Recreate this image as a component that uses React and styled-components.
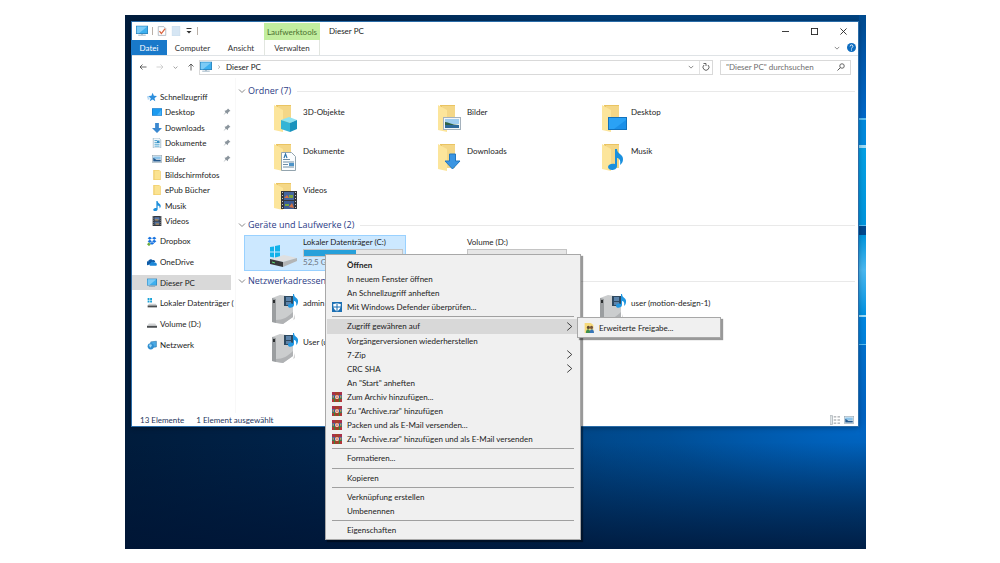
import React from "react";
import styled, { createGlobalStyle } from "styled-components";

const GlobalStyle = createGlobalStyle`
  * {
    box-sizing: border-box;
  }

  body {
    margin: 0;
    background: #fff;
    font-family: Lato, "Open Sans", sans-serif;
    font-size: 8px;
    line-height: 10px;
    color: #1c1c1c;
  }

  button,
  input {
    font: inherit;
    color: inherit;
    margin: 0;
    padding: 0;
    border: 0;
    background: none;
  }

  ul {
    margin: 0;
    padding: 0;
    list-style: none;
  }

  svg {
    display: block;
    flex: none;
  }
`;

const quickAccess = [
  { label: "Schnellzugriff", icon: "star", root: true },
  { label: "Desktop", icon: "desktop", pinned: true },
  { label: "Downloads", icon: "download", pinned: true },
  { label: "Dokumente", icon: "document", pinned: true },
  { label: "Bilder", icon: "picture", pinned: true },
  { label: "Bildschirmfotos", icon: "folder" },
  { label: "ePub Bücher", icon: "folder" },
  { label: "Musik", icon: "music" },
  { label: "Videos", icon: "video" },
];

const places = [
  { label: "Dropbox", icon: "dropbox", root: true },
  { label: "OneDrive", icon: "cloud", root: true },
  { label: "Dieser PC", icon: "pc", root: true, active: true },
  { label: "Lokaler Datenträger (", icon: "systemDrive", root: true },
  { label: "Volume (D:)", icon: "drive", root: true },
  { label: "Netzwerk", icon: "network", root: true },
];

const folders = [
  { label: "3D-Objekte", kind: "cube" },
  { label: "Bilder", kind: "picture" },
  { label: "Desktop", kind: "desktop" },
  { label: "Dokumente", kind: "document" },
  { label: "Downloads", kind: "download" },
  { label: "Musik", kind: "music" },
  { label: "Videos", kind: "video" },
];

// null leaves a cell of the grid empty
const shares = ["admin", null, "user (motion-design-1)", "User (u"];

const menuItems = [
  { label: "Öffnen", bold: true },
  { label: "In neuem Fenster öffnen" },
  { label: "An Schnellzugriff anheften" },
  { label: "Mit Windows Defender überprüfen...", icon: "defender" },
  null,
  { label: "Zugriff gewähren auf", more: true, active: true },
  { label: "Vorgängerversionen wiederherstellen" },
  { label: "7-Zip", more: true },
  { label: "CRC SHA", more: true },
  { label: 'An "Start" anheften' },
  { label: "Zum Archiv hinzufügen...", icon: "rar" },
  { label: 'Zu "Archive.rar" hinzufügen', icon: "rar" },
  { label: "Packen und als E-Mail versenden...", icon: "rar" },
  { label: 'Zu "Archive.rar" hinzufügen und als E-Mail versenden', icon: "rar" },
  null,
  { label: "Formatieren..." },
  null,
  { label: "Kopieren" },
  null,
  { label: "Verknüpfung erstellen" },
  { label: "Umbenennen" },
  null,
  { label: "Eigenschaften" },
];

// 16x16 drawings
const glyphs = {
  star: (
    <>
      <path d="M9 1l2 5 5 .5-4 3.3 1.3 5L9 12l-4.600 2.800L6 9.800 2 6.500 7 6z" fill="#2d8fdd" />
      <path d="M0 8h4M1 11h3" stroke="#7fbcec" strokeWidth="1.500" />
    </>
  ),
  desktop: (
    <>
      <rect x="0" y="2" width="16" height="12" fill="#1277c8" />
      <rect x="1" y="3" width="14" height="10" fill="#1c9bf0" />
      <path d="M8 13l7-9v9z" fill="#46b1f7" />
    </>
  ),
  download: <path d="M5 0h6v8h5l-8 8-8-8h5z" fill="#3a88d0" />,
  document: (
    <>
      <path d="M2 0h9l3 3v13H2z" fill="#f4f9fc" stroke="#8aa9ba" />
      <path d="M4 4h4M4 7h8M4 10h8M4 13h8" stroke="#4ba3cf" strokeWidth="1.500" />
      <path d="M8 4h4v4H8z" fill="#3790c4" />
    </>
  ),
  picture: (
    <>
      <rect x="0.500" y="2.500" width="15" height="11" fill="#e9f2f8" stroke="#96a7b4" />
      <path d="M2 4h12v4H2z" fill="#8dc4ea" />
      <path d="M2 6l5 3h7v3H2z" fill="#24588c" />
    </>
  ),
  folder: (
    <>
      <path d="M2 0h9l3 2v14H2z" fill="#f0cd6a" />
      <path d="M4 1h9v14H4z" fill="#fbe392" />
    </>
  ),
  music: (
    <path
      d="M7 0h2c0 4 5 4 5 8 0 2-1 3-2 4 1-4-1-5-3-5v6c0 2-2 3-4 3s-3-1-3-2.500S4 11 7 11z"
      fill="#1e90dc"
    />
  ),
  video: (
    <>
      <rect x="1" y="0" width="14" height="16" fill="#34383f" />
      <path d="M2.500 1v15M13.500 1v15" stroke="#cfd3d8" strokeDasharray="1 2" />
      <path d="M4 2h8v5H4z" fill="#5b7cae" />
      <path d="M4 9h8v5H4z" fill="#51709c" />
      <path d="M5 5h5v2H5zM6 12h5v2H6z" fill="#b98a4c" />
    </>
  ),
  dropbox: (
    <>
      <path
        d="M4.500 1L8 3.500 4.500 6 1 3.500zM11.500 1L15 3.500 11.500 6 8 3.500zM4.500 6L8 8.500 4.500 11 1 8.500zM11.500 6L15 8.500 11.500 11 8 8.500zM8 9.500l3.500 2.300L8 14l-3.500-2.200z"
        fill="#1672e0"
      />
      <path d="M3 10l3 4-3 2-3-3z" fill="#6cab3c" />
    </>
  ),
  cloud: (
    <>
      <path d="M1 13a3 3 0 0 1 1-6c0-3 5-5 7-2 3-1 4 1 4 3z" fill="#0f5ba7" />
      <path d="M6 14c-3 0-3-4 0-4 0-3 5-3 6-1 4-1 5 5 2 5z" fill="#1d87d8" />
    </>
  ),
  pc: (
    <>
      <rect x="0" y="1" width="16" height="11" fill="#2b80b8" />
      <rect x="1" y="2" width="14" height="9" fill="#3eb0ef" />
      <path d="M1 2h14L4 11H1z" fill="#7ccbf6" />
      <path d="M7 12h2v1H7z" fill="#8ba3b2" />
      <path d="M3 13h10v1H3z" fill="#7c9bb0" />
    </>
  ),
  systemDrive: (
    <>
      <path d="M1 0h3v3H1zM5 0h3v3H5zM1 4h3v3H1zM5 4h3v3H5z" fill="#18a2d8" />
      <path d="M3 9h11l2 3H1z" fill="#c9ccce" />
      <path d="M1 12h15v3H1z" fill="#4b4e50" />
    </>
  ),
  drive: (
    <>
      <path d="M3 7h10l3 4H0z" fill="#d2d4d5" />
      <path d="M0 11h16v3H0z" fill="#4b4e50" />
    </>
  ),
  network: (
    <>
      <path d="M6 3l9-1v9l-9 1z" fill="#4aa9e4" stroke="#2b76ad" />
      <circle cx="6" cy="10" r="5" fill="#2f8ed0" />
      <path d="M3 8c2-2 4-1 5 0l-2 4c-2 0-2-3-3-4z" fill="#9fd6f4" />
    </>
  ),
  defender: (
    <>
      <rect x="0" y="0" width="16" height="16" fill="#1b6fb3" />
      <path d="M8 1.500c2 1 4 1.500 6 1.500 0 6-1 9-6 12-5-3-6-6-6-12 2 0 4-.5 6-1.500z" fill="#fff" />
      <path d="M8 2v13M2 8h12" stroke="#1b6fb3" strokeWidth="1.600" />
    </>
  ),
  rar: (
    <>
      <path d="M0 0h16v5H0z" fill="#a8304a" />
      <path d="M0 5h16v6H0z" fill="#2f549e" />
      <path d="M0 10h16v6H0z" fill="#3f8434" />
      <path d="M0 11h3v5H0zM13 11h3v5h-3z" fill="#b8323a" />
      <path d="M5 0h6v16H5z" fill="#a5402a" />
      <path d="M6 5h4v1h1v4h-1v1H6v-1H5V6h1z" fill="#f0cdb8" />
      <path d="M7 7h2v2H7z" fill="#d0464c" />
      <path d="M1 6h2v3H1zM13 6h2v3h-2z" fill="#dfaa3c" />
    </>
  ),
  people: (
    <>
      <path d="M1 0h10l4 3v13H1z" fill="#f6da7c" />
      <circle cx="7" cy="7" r="2.500" fill="#5f4a35" />
      <circle cx="12" cy="7" r="2.500" fill="#77553a" />
      <path d="M3 16c0-8 7-8 7 0z" fill="#3f8f4d" />
      <path d="M9 16c0-8 7-8 7 0z" fill="#3675b8" />
    </>
  ),
  pin: (
    <path
      d="M10 1l5 5-2 .5-3 3-.5 3L6 9.500l-5 5 4-6-2-3 3-.5 3-2.500z"
      fill="#8a949c"
    />
  ),
  help: (
    <>
      <circle cx="8" cy="8" r="8" fill="#0e6dc0" />
      <path d="M5.500 6c0-3.500 5-3.500 5 0 0 2-2.500 2-2.500 4M8 11.500v2" fill="none" stroke="#fff" strokeWidth="1.600" />
    </>
  ),
  check: (
    <>
      <path d="M2 1h9l3 3v11H2z" fill="#fff" stroke="#8d9aa6" />
      <path d="M4 8l3 4 6-8" fill="none" stroke="#d9603b" strokeWidth="2" />
    </>
  ),
  sheet: <path d="M2 0h12v16H2z" fill="#d6e6f4" stroke="#c3d7e8" />,
  back: <path d="M15 8H2M7 3L2 8l5 5" fill="none" stroke="#444" strokeWidth="1.600" />,
  forward: <path d="M1 8h13M9 3l5 5-5 5" fill="none" stroke="#c8c8c8" strokeWidth="1.600" />,
  up: <path d="M8 15V2M3 7l5-5 5 5" fill="none" stroke="#444" strokeWidth="1.600" />,
  down: <path d="M2 5l6 6 6-6" fill="none" stroke="currentColor" strokeWidth="2" />,
  right: <path d="M4 1l8 7-8 7" fill="none" stroke="currentColor" strokeWidth="1.500" />,
  refresh: (
    <>
      <path d="M12 4a6 6 0 1 1-8 0" fill="none" stroke="#555" strokeWidth="1.800" />
      <path d="M3 1h5v5" fill="none" stroke="#555" strokeWidth="1.800" />
    </>
  ),
  search: (
    <>
      <circle cx="10" cy="6" r="4.500" fill="none" stroke="#555" strokeWidth="1.800" />
      <path d="M7 9l-6 6" stroke="#555" strokeWidth="2" />
    </>
  ),
  customize: <path d="M3 2h10v2H3zM3 8h10l-5 5z" fill="#333" />,
  minimize: <path d="M0 8h16" stroke="#222" strokeWidth="2" />,
  maximize: <rect x="1" y="1" width="14" height="14" fill="none" stroke="#222" strokeWidth="2" />,
  close: <path d="M1 1l14 14M15 1L1 15" stroke="#222" strokeWidth="2" />,
  list: (
    <>
      <path d="M0 1h4v14H0z" fill="#e4e8ea" stroke="#98a2a8" />
      <path d="M6 3h4M12 3h4M6 8h4M12 8h4M6 13h4M12 13h4" stroke="#8a8f93" strokeWidth="1.500" />
    </>
  ),
};

const Icon = ({ name, size = 10 }) => (
  <svg width={size} height={size} viewBox="0 0 16 16" aria-hidden="true">
    {glyphs[name]}
  </svg>
);

const folderBadges = {
  cube: (
    <>
      <path d="M13 17l8-3 8 3-7 3z" fill="#8ee3f2" />
      <path d="M13 17l9 3v9l-9-3z" fill="#35b4d6" />
      <path d="M22 20l7-3v9l-7 3z" fill="#1a93bd" />
    </>
  ),
  picture: (
    <>
      <rect x="11.500" y="14.500" width="17" height="12" fill="#f3f6f8" stroke="#a5b2bd" />
      <path d="M13 16h14v5H13z" fill="#9fcdf0" />
      <path d="M13 19c4 0 6 3 14 3v1H13z" fill="#2f6247" />
      <path d="M13 22h14v3H13z" fill="#2e699b" />
    </>
  ),
  desktop: (
    <>
      <rect x="12" y="14" width="19" height="13" fill="#1272bd" />
      <rect x="13" y="15" width="17" height="11" fill="#2aa2f5" />
      <path d="M18 26l12-9v9z" fill="#1b90e8" />
    </>
  ),
  document: (
    <>
      <path d="M13.500 10.500h10l4 4v14h-14z" fill="#fbfdfe" stroke="#93a4ae" />
      <path d="M15 20h11M15 22.500h5M15 25h11M15 17.500h7" stroke="#6f8ea5" strokeWidth="1" />
      <path d="M16 16l1.500-4 1.500 4" fill="none" stroke="#3177ad" strokeWidth="1.200" />
      <path d="M21 21h5v3h-5z" fill="#4e94c8" />
    </>
  ),
  download: <path d="M17.500 12h6v7h4.500l-7.500 8-7.500-8h4.500z" fill="#3a95e2" stroke="#2278c0" />,
  music: (
    <path
      d="M19 7h2c0 5 6 5 6 10 0 3-1 4-3 6 1-5-1-7-3-7v8c0 3-3 4-5 4s-4-1-4-3 3-4 7-3z"
      fill="#1a90de"
    />
  ),
  video: (
    <>
      <rect x="13" y="10" width="16" height="18" fill="#33363b" />
      <path d="M14.500 11v17M27.500 11v17" stroke="#c8ccd0" strokeDasharray="1 2" />
      <path d="M16 11h10v8H16z" fill="#44659e" />
      <path d="M16 20h10v8H16z" fill="#3b5c94" />
      <path d="M16 17l3-3 2 3zM21 26l3-4 2 5z" fill="#d47344" />
      <path d="M21 14h4v3h-4zM17 23h4v2h-4z" fill="#7aa33e" />
    </>
  ),
};

const FolderIcon = ({ kind }) => (
  <svg width="32" height="32" viewBox="0 0 32 32" aria-hidden="true">
    <path d="M8 2h15v24H8z" fill="#eac462" />
    <path d="M10 3h13v23H10z" fill="#f4d787" />
    <path d="M6 2l9 5v22L6 27z" fill="#fce59b" />
    {folderBadges[kind]}
  </svg>
);

const DriveIcon = ({ system }) => (
  <svg width="32" height="32" viewBox="0 0 32 32" aria-hidden="true">
    {system && (
      <path d="M2 10l4-.600v5H2zM7 9l5-1v6.400H7zM2 15.400h4v5l-4-.600zM7 15.400h5v6.200l-5-.800z" fill="#12b2ea" />
    )}
    <path d="M2 22l14-4 13 3-14 4z" fill="#dfe0e1" />
    <path d="M2 22l13 3v5L2 27z" fill="#37393b" />
    <path d="M15 25l14-4v3l-14 6z" fill="#b3b5b6" />
    <path d="M4 25l3 1" stroke="#5ddd70" />
  </svg>
);

const ServerIcon = () => (
  <svg width="32" height="32" viewBox="0 0 32 32" aria-hidden="true">
    <path d="M16 31l9-4 2-6v5z" fill="#d4d4d4" />
    <path d="M4 5l8-3 13 2v20l-10 7-11-2z" fill="#cbcdce" />
    <path d="M4 5l4 1v24l-4-1z" fill="#9b9ea0" />
    <path d="M5 7h2v3H5z" fill="#2b2e30" />
    <path d="M8 27c7 0 12-3 17-8v5l-10 7-7-1z" fill="#b0b2b4" />
    <rect x="16" y="3" width="9" height="10" fill="#2e4960" />
    <path d="M18 4h5v4h-5zM18 9h5v3h-5z" fill="#5c84ab" />
    <path
      d="M25 1h1c0 4 5 4 4 8 0 2-1 3-2 4 1-4-1-5-2-5v4c0 3-6 4-6 1 0-2 2-3 5-2z"
      fill="#2097e2"
    />
  </svg>
);

const App = () => {
  return (
    <Page>
      <GlobalStyle />
      <Desktop>
        <Explorer>
          <TitleBar>
            <QuickTools>
              <Icon name="pc" size={12} />
              <Divider />
              <Icon name="check" />
              <Icon name="sheet" />
              <Icon name="customize" size={8} />
              <Divider />
            </QuickTools>
            <ContextTab>Laufwerktools</ContextTab>
            <WindowTitle>Dieser PC</WindowTitle>
            <WindowButtons>
              <IconButton aria-label="Minimieren">
                <Icon name="minimize" size={7} />
              </IconButton>
              <IconButton aria-label="Maximieren">
                <Icon name="maximize" size={7} />
              </IconButton>
              <IconButton aria-label="Schließen">
                <Icon name="close" size={7} />
              </IconButton>
            </WindowButtons>
          </TitleBar>
          <Ribbon>
            <RibbonTab $width={36} $primary>
              Datei
            </RibbonTab>
            <RibbonTab $width={51}>Computer</RibbonTab>
            <RibbonTab $width={46}>Ansicht</RibbonTab>
            <RibbonTab $width={56} $context>
              Verwalten
            </RibbonTab>
            <RibbonEnd>
              <IconButton aria-label="Menüband erweitern">
                <Icon name="down" size={6} />
              </IconButton>
              <IconButton aria-label="Hilfe">
                <Icon name="help" size={9} />
              </IconButton>
            </RibbonEnd>
          </Ribbon>

          <AddressRow>
            <NavButtons>
              <IconButton aria-label="Zurück">
                <Icon name="back" size={8} />
              </IconButton>
              <IconButton aria-label="Vorwärts">
                <Icon name="forward" size={8} />
              </IconButton>
              <IconButton aria-label="Verlauf">
                <Icon name="down" size={5} />
              </IconButton>
              <IconButton aria-label="Nach oben">
                <Icon name="up" size={8} />
              </IconButton>
            </NavButtons>
            <AddressBar>
              <Icon name="pc" size={12} />
              <Icon name="right" size={4} />
              <Crumb href="#pc">Dieser PC</Crumb>
              <IconButton aria-label="Vorherige Orte">
                <Icon name="down" size={6} />
              </IconButton>
              <RefreshButton aria-label="Aktualisieren">
                <Icon name="refresh" size={8} />
              </RefreshButton>
            </AddressBar>
            <SearchBox>
              <SearchInput
                type="text"
                aria-label="Suchen"
                placeholder={'"Dieser PC" durchsuchen'}
              />
              <Icon name="search" size={8} />
            </SearchBox>
          </AddressRow>

          <Body>
            <Sidebar>
              <QuickList>
                {quickAccess.map((item) => (
                  <SideEntry key={item.label} item={item} />
                ))}
              </QuickList>
              <PlaceList>
                {places.map((item) => (
                  <SideEntry key={item.label} item={item} />
                ))}
              </PlaceList>
            </Sidebar>

            <Content>
              <GroupHeader title="Ordner (7)" />
              <Tiles>
                {folders.map((folder) => (
                  <Tile key={folder.label}>
                    <FolderIcon kind={folder.kind} />
                    <TileText $top={5}>{folder.label}</TileText>
                  </Tile>
                ))}
              </Tiles>

              <GroupHeader title="Geräte und Laufwerke (2)" />
              <Tiles>
                <Tile $selected>
                  <DriveIcon system />
                  <TileText $top={1}>
                    Lokaler Datenträger (C:)
                    <Meter>
                      <MeterFill style={{ width: "53%" }} />
                    </Meter>
                    <Muted>52,5 GB</Muted>
                  </TileText>
                </Tile>
                <Tile>
                  <DriveIcon />
                  <TileText $top={1}>
                    Volume (D:)
                    <Meter />
                  </TileText>
                </Tile>
              </Tiles>

              <GroupHeader title="Netzwerkadressen" />
              <Tiles>
                {shares.map((name, index) =>
                  name ? (
                    <Tile key={name}>
                      <ServerIcon />
                      <TileText $top={6}>{name}</TileText>
                    </Tile>
                  ) : (
                    <Tile key={index} />
                  )
                )}
              </Tiles>
            </Content>
          </Body>

          <StatusBar>
            <span>13 Elemente</span>
            <span>1 Element ausgewählt</span>
            <ViewButtons>
              <IconButton aria-label="Details">
                <Icon name="list" />
              </IconButton>
              <IconButton aria-label="Große Symbole">
                <Icon name="picture" />
              </IconButton>
            </ViewButtons>
          </StatusBar>
        </Explorer>

        <ContextMenu>
          {menuItems.map((item, index) =>
            item ? (
              <MenuButton key={index} $active={item.active} $bold={item.bold}>
                <MenuIcon>{item.icon && <Icon name={item.icon} />}</MenuIcon>
                <MenuLabel>{item.label}</MenuLabel>
                {item.more && <Icon name="right" size={9} />}
              </MenuButton>
            ) : (
              <MenuLine key={index} />
            )
          )}
        </ContextMenu>
        <SubMenu>
          <MenuButton>
            <MenuIcon>
              <Icon name="people" />
            </MenuIcon>
            <MenuLabel>Erweiterte Freigabe...</MenuLabel>
          </MenuButton>
        </SubMenu>
      </Desktop>
    </Page>
  );
};

const SideEntry = ({ item }) => (
  <SideItem>
    <SideLink href="#" $root={item.root} $active={item.active}>
      <Icon name={item.icon} />
      <SideLabel>{item.label}</SideLabel>
      {item.pinned && <Icon name="pin" size={8} />}
    </SideLink>
  </SideItem>
);

const GroupHeader = ({ title }) => (
  <Group>
    <Icon name="down" size={8} />
    <GroupTitle>{title}</GroupTitle>
    <GroupLine />
  </Group>
);

// Styled-components
const Page = styled.div`
  display: flex;
  min-height: 100vh;
  padding: 15px 134px 14px 125px;
`;

const Desktop = styled.div`
  position: relative;
  flex: 1;
  min-width: 0;
  padding: 6px 7px 122px 6px;
  background:
    linear-gradient(
        #004a8e 0,
        #0056a8 39px,
        #0068c8 103px,
        #5abdf0 103px,
        #5abdf0 105px,
        #0089dc 105px,
        #0089dc 130px,
        #9edcf7 130px,
        #9edcf7 133px,
        #05a0e4 133px,
        #0094dc 210px,
        #5abdf0 210px,
        #5abdf0 211px,
        #00488e 211px,
        #00488e 220px,
        #0094dc 220px,
        #4ab8f0 255px,
        #0090e0 300px,
        #9edcf7 300px,
        #9edcf7 302px,
        #0086e0 302px,
        #0080da 329px,
        #5abdf0 329px,
        #5abdf0 330px,
        #0070cc 330px,
        #0062c0 400px,
        rgba(0, 98, 192, 0) 430px
      )
      right top / 7px 100% no-repeat,
    linear-gradient(rgba(0, 20, 52, 0) 80%, rgba(0, 20, 52, 0.8) 100%),
    radial-gradient(ellipse 60% 34% at 100% 77%, #0067c6 0%, rgba(0, 92, 176, 0.55) 45%, rgba(0, 70, 140, 0) 100%),
    linear-gradient(90deg, #001c3c 0%, #00244c 30%, #003c74 65%, #00427f 100%);
`;

const Explorer = styled.div`
  background: #fff;
  border: 1px solid #2a6ca8;
  box-shadow: 0 1px 5px rgba(0, 0, 0, 0.3);
`;

const TitleBar = styled.div`
  display: flex;
  align-items: stretch;
  height: 18px;
`;

const QuickTools = styled.div`
  display: flex;
  align-items: center;
  gap: 4px;
  width: 132px;
  padding-left: 4px;
`;

const Divider = styled.span`
  width: 1px;
  height: 8px;
  background: #b9b0a8;
`;

const ContextTab = styled.div`
  display: flex;
  align-items: center;
  justify-content: center;
  width: 56px;
  margin-top: 1px;
  background: #c2ee9f;
  color: #4b7030;
`;

const WindowTitle = styled.div`
  display: flex;
  align-items: center;
  padding-left: 9px;
`;

const IconButton = styled.button`
  display: flex;
  align-items: center;
  justify-content: center;
  color: #666;
  cursor: pointer;
`;

const WindowButtons = styled.div`
  display: flex;
  gap: 22px;
  margin-left: auto;
  padding-right: 11px;
`;

const Ribbon = styled.div`
  display: flex;
  height: 16px;
  border-bottom: 1px solid #dfe3e6;
`;

const RibbonTab = styled.button`
  width: ${(props) => props.$width}px;
  margin-left: ${(props) => (props.$primary ? "-1px" : "0")};
  background: ${(props) => (props.$primary ? "#1979ca" : "transparent")};
  color: ${(props) => (props.$primary ? "#fff" : "#333")};
  border: solid #e2e6e0;
  border-width: ${(props) => (props.$context ? "0 1px" : "0")};
  cursor: pointer;
`;

const RibbonEnd = styled.div`
  display: flex;
  gap: 7px;
  margin-left: auto;
  padding-right: 2px;
`;

const AddressRow = styled.div`
  display: flex;
  align-items: center;
  height: 22px;
  padding: 0 7px;
`;

const NavButtons = styled.div`
  display: flex;
  align-items: center;
  justify-content: space-between;
  width: 56px;
  margin-right: 4px;
`;

const AddressBar = styled.div`
  display: flex;
  flex: 1;
  align-items: center;
  gap: 5px;
  height: 15px;
  border: 1px solid #d9d9d9;
  color: #555;
`;

const Crumb = styled.a`
  flex: 1;
  color: #222;
  text-decoration: none;
`;

const RefreshButton = styled(IconButton)`
  width: 13px;
  height: 13px;
  border-left: 1px solid #e2e2e2;
`;

const SearchBox = styled.label`
  display: flex;
  align-items: center;
  width: 131px;
  height: 15px;
  margin-left: 7px;
  padding: 0 5px;
  border: 1px solid #d9d9d9;
`;

const SearchInput = styled.input`
  flex: 1;
  min-width: 0;
  outline: none;

  &::placeholder {
    color: #6d6d6d;
    opacity: 1;
  }
`;

const Body = styled.div`
  display: flex;
  min-height: 335px;
`;

const Sidebar = styled.nav`
  width: 104px;
  padding: 11px 4px 0 0;
  border-right: 1px solid #f8f8f8;
`;

const QuickList = styled.ul`
  display: flex;
  flex-direction: column;
  height: 140px;
`;

const PlaceList = styled(QuickList)`
  height: 124px;
  margin-top: 2px;
`;

const SideItem = styled.li`
  display: flex;
  flex: 1;
  align-items: center;
`;

const SideLink = styled.a`
  display: flex;
  flex: 1;
  align-items: center;
  gap: 3px;
  min-width: 0;
  height: 15px;
  padding-left: ${(props) => (props.$root ? "15px" : "20px")};
  background: ${(props) => (props.$active ? "#d9d9d9" : "transparent")};
  color: inherit;
  text-decoration: none;
`;

const SideLabel = styled.span`
  flex: 1;
  min-width: 0;
  white-space: nowrap;
`;

const Content = styled.main`
  flex: 1;
  min-width: 0;
  padding: 5px 3px 0 2px;
`;

const Group = styled.div`
  display: flex;
  align-items: center;
  gap: 2px;
  height: 16px;
  color: #888;
`;

const GroupTitle = styled.h2`
  margin: 0;
  font-family: "Open Sans", "Noto Sans", sans-serif;
  font-size: 9px;
  font-weight: 400;
  line-height: 16px;
  color: #2c3c86;
`;

const GroupLine = styled.span`
  flex: 1;
  height: 1px;
  margin-left: 4px;
  background: #e9e9e9;
`;

const Tiles = styled.div`
  display: grid;
  grid-template-columns: repeat(auto-fill, 162px);
  grid-auto-rows: 36px;
  gap: 3px 2px;
  padding: 2px 0 2px 6px;
`;

const Tile = styled.div`
  display: flex;
  align-items: center;
  gap: 3px;
  padding-left: 23px;
  background: ${(props) => (props.$selected ? "#cce8ff" : "transparent")};
  border: 1px solid ${(props) => (props.$selected ? "#99d1ff" : "transparent")};
`;

const TileText = styled.div`
  align-self: flex-start;
  width: 100px;
  padding-top: ${(props) => props.$top}px;
`;

const Meter = styled.div`
  height: 8px;
  margin-top: 2px;
  background: #e6e6e6;
  border: 1px solid #c4c4c4;
`;

const MeterFill = styled.div`
  height: 6px;
  background: #26a0da;
`;

const Muted = styled.span`
  color: #6d7680;
`;

const StatusBar = styled.div`
  display: flex;
  align-items: center;
  gap: 12px;
  height: 13px;
  padding: 0 4px 0 8px;
  color: #26365c;
`;

const ViewButtons = styled.div`
  display: flex;
  gap: 4px;
  margin-left: auto;
`;

const ContextMenu = styled.div`
  position: absolute;
  top: 239px;
  left: 200px;
  display: flex;
  flex-direction: column;
  width: 256px;
  height: 286px;
  padding: 3px 1px 2px;
  background: #f0f0f0;
  border: 1px solid #a8a8a8;
  box-shadow: 2px 2px 1px rgba(0, 0, 0, 0.4);
`;

const SubMenu = styled(ContextMenu)`
  top: 302px;
  left: 452px;
  width: 144px;
  height: 21px;
`;

const MenuButton = styled.button`
  display: flex;
  flex: 1;
  align-items: center;
  padding: 0 5px;
  background: ${(props) => (props.$active ? "#d8d8d8" : "transparent")};
  color: #222;
  font-weight: ${(props) => (props.$bold ? 700 : 400)};
  text-align: left;
  white-space: nowrap;
`;

const MenuIcon = styled.span`
  width: 15px;
`;

const MenuLabel = styled.span`
  flex: 1;
`;

const MenuLine = styled.hr`
  width: 242px;
  height: 1px;
  margin: 2px auto;
  border: 0;
  background: #a0a0a0;
`;

export default App;
